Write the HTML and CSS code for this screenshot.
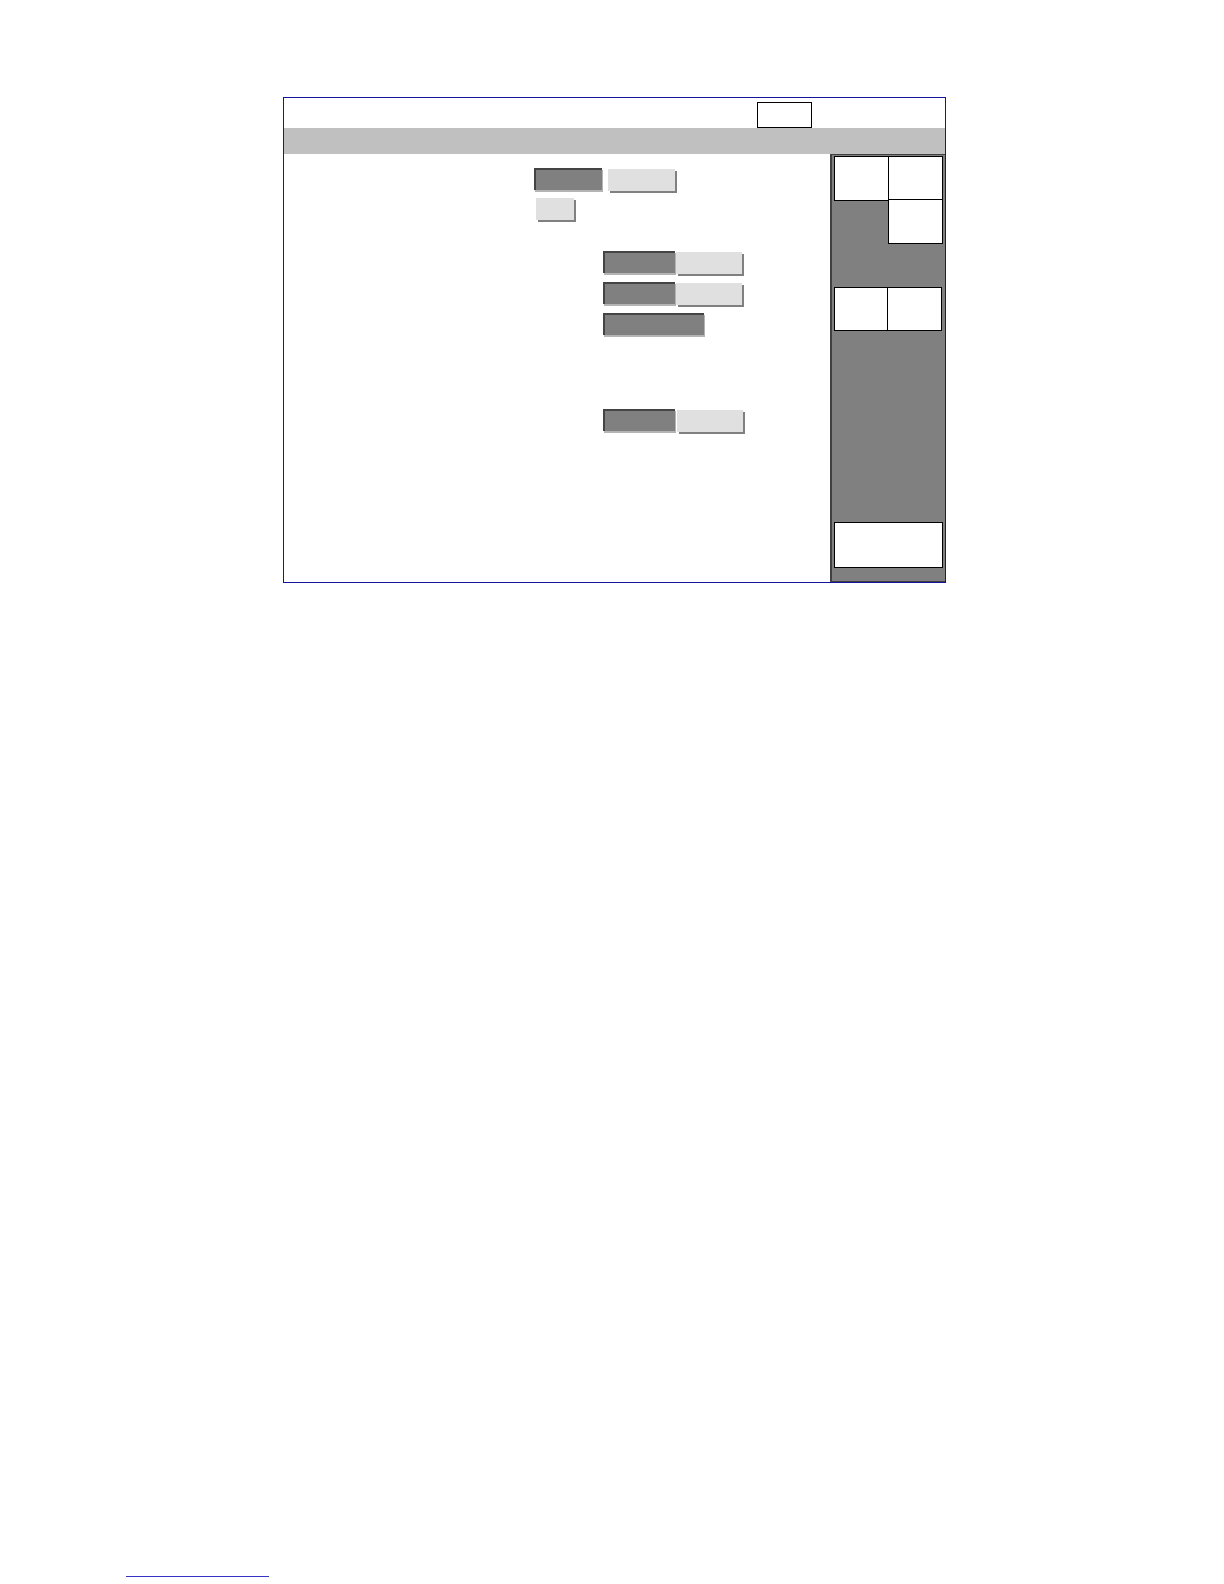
FILE: index.html
```html
<!DOCTYPE html>
<html>
<head>
<meta charset="utf-8">
<link rel="stylesheet" href="styles.css">
</head>
<body>
<div class="frame">
  <div class="header"><div class="hbox"></div></div>
  <div class="titlebar"></div>
  <div class="main">
    <div class="content">
      <div class="row r1"><div class="btn dark bw-a"></div><div class="btn light bw-b"></div></div>
      <div class="row r2"><div class="btn light bw-s"></div></div>
      <div class="row r3"><div class="btn dark bw-d"></div><div class="btn light bw-l"></div></div>
      <div class="row r4"><div class="btn dark bw-d"></div><div class="btn light bw-l"></div></div>
      <div class="row r5"><div class="btn dark bw-w"></div></div>
      <div class="row r6"><div class="btn dark bw-d"></div><div class="btn light bw-l"></div></div>
    </div>
    <div class="panel">
      <div class="pgrid">
        <div class="pbox b1"></div>
        <div class="pbox b2"></div>
        <div class="pbox b3"></div>
      </div>
      <div class="prow">
        <div class="pbox b4"></div>
        <div class="pbox b5"></div>
      </div>
      <div class="pbox b6"></div>
    </div>
  </div>
</div>
<div class="footline"></div>
</body>
</html>
```
FILE: styles.css
```css
html, body {
  margin: 0;
  padding: 0;
  background: #ffffff;
  font-family: "Liberation Sans", Arial, sans-serif;
}
.frame {
  margin: 97px 0 0 283px;
  width: 661px;
  height: 484px;
  border: 1px solid #1414a0;
  display: flex;
  flex-direction: column;
}
.header {
  height: 30px;
  box-sizing: border-box;
  padding: 4px 0 0 473px;
}
.hbox {
  width: 55px;
  height: 26px;
  box-sizing: border-box;
  border: 1px solid #000000;
  background: #ffffff;
}
.titlebar {
  height: 26px;
  background: #c0c0c0;
}
.main {
  flex: 1;
  display: flex;
}
.content {
  width: 546px;
  padding-top: 14px;
  box-sizing: border-box;
  display: flex;
  flex-direction: column;
}
.row {
  display: flex;
  height: 22px;
}
.r1 { margin-left: 250px; }
.r2 { margin-left: 252px; margin-top: 8px; }
.r3 { margin-left: 319px; margin-top: 31px; }
.r4 { margin-left: 319px; margin-top: 9px; }
.r5 { margin-left: 319px; margin-top: 9px; }
.r6 { margin-left: 319px; margin-top: 74px; }
.btn {
  height: 22px;
  box-sizing: border-box;
}
.dark {
  background: #808080;
  border-top: 2px solid #444444;
  border-left: 2px solid #444444;
  box-shadow: 1px 2px 0 #b4b4b4;
}
.light {
  background: #e0e0e0;
  box-shadow: 2px 2px 0 #808080;
  margin-top: 1px;
}
.bw-a { width: 68px; }
.bw-b { width: 67px; margin-left: 6px; }
.bw-s { width: 38px; margin-top: 0; }
.bw-d { width: 72px; }
.bw-l { width: 66px; margin-left: 1px; }
.r6 .bw-l { margin-left: 2px; }
.bw-w { width: 101px; }
.panel {
  flex: 1;
  background: #808080;
  border-left: 2px solid #404040;
  border-top: 1px solid #404040;
  border-bottom: 1px solid #404040;
  padding: 1px 0 0 2px;
  display: flex;
  flex-direction: column;
}
.pbox {
  background: #ffffff;
  border: 1px solid #000000;
  box-sizing: border-box;
}
.pgrid {
  display: grid;
  grid-template-columns: 55px 54px;
  grid-template-rows: 44px 45px;
}
.b1 { grid-column: 1; grid-row: 1; height: 45px; }
.b2 { grid-column: 2; grid-row: 1; margin-left: -1px; height: 44px; }
.b3 { grid-column: 2; grid-row: 2; margin-left: -1px; margin-top: -1px; height: 45px; }
.prow {
  display: flex;
  margin-top: 42px;
}
.b4 { width: 54px; height: 44px; }
.b5 { width: 55px; height: 44px; margin-left: -1px; }
.b6 {
  width: 109px;
  height: 46px;
  margin-top: 191px;
}
.footline {
  margin: 993px 0 0 126px;
  width: 143px;
  height: 1px;
  background: #3434c8;
}
```
